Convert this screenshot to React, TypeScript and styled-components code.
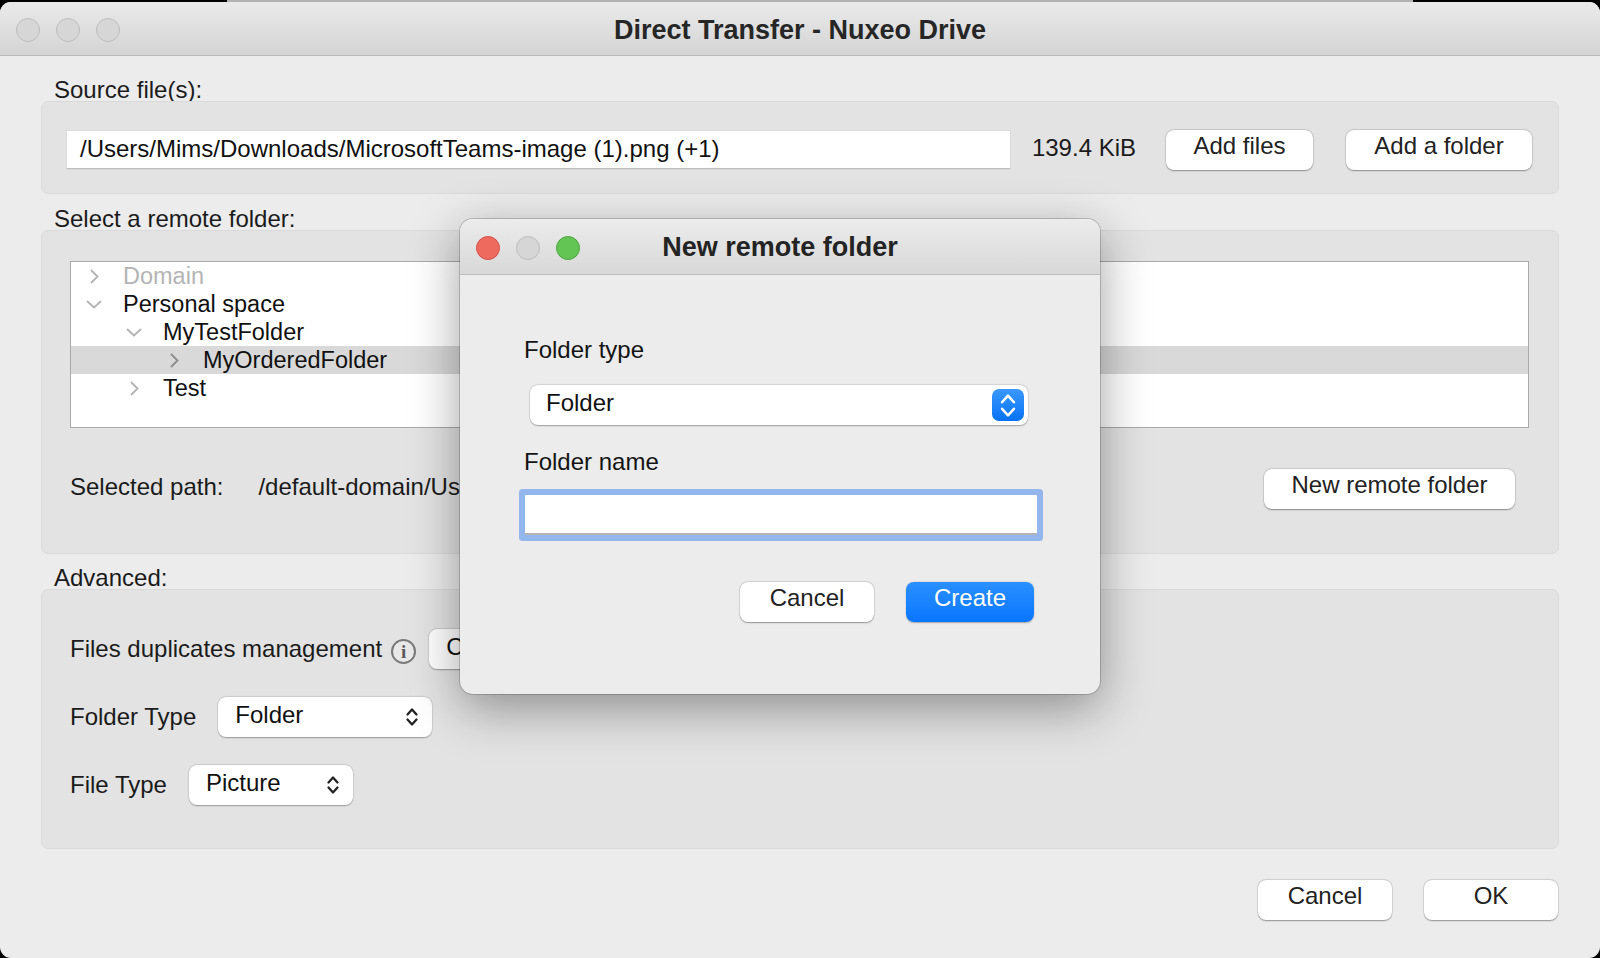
import React from 'react';
import styled, {createGlobalStyle, css} from 'styled-components';

const GlobalStyle = createGlobalStyle`
	html, body {
		margin: 0;
		padding: 0;
	}
	body {
		font-family: 'Liberation Sans', Arial, sans-serif;
		color: #1d1d1d;
	}
`;

const FONT = `'Liberation Sans', Arial, sans-serif`;

const UpDown = ({color = '#222', w = 14, h = 22, stroke = 2.3}: {color?: string; w?: number; h?: number; stroke?: number}) => (
	<svg width={w} height={h} viewBox="0 0 14 22">
		<polyline points="2.5,8.5 7,3.5 11.5,8.5" fill="none" stroke={color} strokeWidth={stroke} strokeLinecap="round" strokeLinejoin="round" />
		<polyline points="2.5,13.5 7,18.5 11.5,13.5" fill="none" stroke={color} strokeWidth={stroke} strokeLinecap="round" strokeLinejoin="round" />
	</svg>
);

const Chevron = ({open, dark}: {open?: boolean; dark?: boolean}) => {
	const color = dark ? '#8c8c8c' : '#b3b3b3';
	return open ? (
		<svg width="16" height="9" viewBox="0 0 16 9">
			<polyline points="1.5,1.5 8,7.5 14.5,1.5" fill="none" stroke={color} strokeWidth="1.8" strokeLinecap="round" />
		</svg>
	) : (
		<svg width="9" height="15" viewBox="0 0 9 15">
			<polyline points="1.5,1.5 7.5,7.5 1.5,13.5" fill="none" stroke={color} strokeWidth="1.8" strokeLinecap="round" />
		</svg>
	);
};

type TreeItem = {label: string; level: number; open?: boolean; selected?: boolean; disabled?: boolean};

const tree: TreeItem[] = [
	{label: 'Domain', level: 0, disabled: true},
	{label: 'Personal space', level: 0, open: true},
	{label: 'MyTestFolder', level: 1, open: true},
	{label: 'MyOrderedFolder', level: 2, selected: true},
	{label: 'Test', level: 1},
];

export default function App() {
	return (
		<Desktop>
			<GlobalStyle />
			<Window>
				<TitleBar>
					<Lights>
						<Light />
						<Light />
						<Light />
					</Lights>
					<WindowTitle>Direct Transfer - Nuxeo Drive</WindowTitle>
					<span />
				</TitleBar>

				<Content>
					<GroupLabel $top={23}>Source file(s):</GroupLabel>
					<GroupBox $height={93}>
						<SourceRow>
							<PathInput>/Users/Mims/Downloads/MicrosoftTeams-image (1).png (+1)</PathInput>
							<SizeText>139.4 KiB</SizeText>
							<MacButton $width={147}>Add files</MacButton>
							<MacButton $width={186} style={{marginLeft: 33}}>
								Add a folder
							</MacButton>
						</SourceRow>
					</GroupBox>

					<GroupLabel $top={14}>Select a remote folder:</GroupLabel>
					<GroupBox $height={324}>
						<RemoteInner>
							<Tree>
								{tree.map((item) => (
									<TreeRow key={item.label} $level={item.level} $selected={item.selected}>
										<ChevronCell>
											<Chevron open={item.open} dark={item.selected} />
										</ChevronCell>
										<TreeLabel $disabled={item.disabled}>{item.label}</TreeLabel>
									</TreeRow>
								))}
							</Tree>
							<PathRow>
								<PathLabel>Selected path:</PathLabel>
								<PathValue>/default-domain/UserWorkspaces/mims/MyTestFolder/MyOrderedFolder</PathValue>
								<MacButton $width={251}>New remote folder</MacButton>
							</PathRow>
						</RemoteInner>
					</GroupBox>

					<GroupLabel $top={13}>Advanced:</GroupLabel>
					<GroupBox $height={260}>
						<AdvancedInner>
							<FieldRow>
								<FieldLabel>Files duplicates management</FieldLabel>
								<InfoIcon>i</InfoIcon>
								<Combo $width={300} style={{marginLeft: 13}}>
									<ComboText>Create a new document</ComboText>
								</Combo>
							</FieldRow>
							<FieldRow>
								<FieldLabel>Folder Type</FieldLabel>
								<Combo $width={214}>
									<ComboText>Folder</ComboText>
									<UpDown />
								</Combo>
							</FieldRow>
							<FieldRow>
								<FieldLabel>File Type</FieldLabel>
								<Combo $width={164}>
									<ComboText>Picture</ComboText>
									<UpDown />
								</Combo>
							</FieldRow>
						</AdvancedInner>
					</GroupBox>

					<Footer>
						<MacButton $width={134}>Cancel</MacButton>
						<MacButton $width={134}>OK</MacButton>
					</Footer>
				</Content>

				<Dialog>
					<DialogTitleBar>
						<Lights>
							<Light $color="red" />
							<Light />
							<Light $color="green" />
						</Lights>
						<DialogTitle>New remote folder</DialogTitle>
						<span />
					</DialogTitleBar>
					<DialogBody>
						<DialogLabel $top={61}>Folder type</DialogLabel>
						<DialogCombo>
							<ComboText>Folder</ComboText>
							<Stepper>
								<UpDown color="#fff" w={20} h={29} stroke={1.9} />
							</Stepper>
						</DialogCombo>
						<DialogLabel $top={23}>Folder name</DialogLabel>
						<NameInput />
						<DialogButtons>
							<MacButton $width={134}>Cancel</MacButton>
							<MacButton $width={128} $primary>
								Create
							</MacButton>
						</DialogButtons>
					</DialogBody>
				</Dialog>
			</Window>
		</Desktop>
	);
}

const Desktop = styled.div`
	width: 1600px;
	height: 958px;
	padding-top: 2px;
	box-sizing: border-box;
	overflow: hidden;
	background: linear-gradient(to right, #000 0 227px, #b2b2b2 227px 1413px, #000 1413px);
`;

const Window = styled.div`
	position: relative;
	width: 1600px;
	height: 956px;
	border-radius: 11px;
	overflow: hidden;
	background: #ececec;
	display: flex;
	flex-direction: column;
`;

const TitleBar = styled.div`
	height: 53px;
	flex-shrink: 0;
	display: grid;
	grid-template-columns: 1fr auto 1fr;
	align-items: center;
	padding: 0 16px;
	background: linear-gradient(to bottom, #eaeaea, #d4d4d4);
	border-bottom: 1px solid #b9b9b9;
`;

const Lights = styled.div`
	display: flex;
	gap: 16px;
	margin-top: 2px;
`;

const Light = styled.span<{$color?: 'red' | 'green'}>`
	width: 24px;
	height: 24px;
	border-radius: 50%;
	box-sizing: border-box;
	background: #d6d6d6;
	border: 1px solid #bdbdbd;
	${({$color}) =>
		$color === 'red' &&
		css`
			background: #ee6a5e;
			border-color: #d25448;
		`}
	${({$color}) =>
		$color === 'green' &&
		css`
			background: #62c554;
			border-color: #4ca83f;
		`}
`;

const WindowTitle = styled.div`
	font-family: ${FONT};
	font-weight: 700;
	font-size: 27px;
	color: #262626;
	margin-top: 4px;
`;

const Content = styled.div`
	padding: 0 41px;
	display: flex;
	flex-direction: column;
`;

const GroupLabel = styled.div<{$top: number}>`
	margin-top: ${({$top}) => $top}px;
	padding-left: 13px;
	font-size: 24px;
	line-height: 22px;
	height: 22px;
	color: #1b1b1b;
`;

const GroupBox = styled.div<{$height: number}>`
	height: ${({$height}) => $height}px;
	box-sizing: border-box;
	background: #e3e3e3;
	border: 1px solid #dadada;
	border-radius: 7px;
`;

const SourceRow = styled.div`
	display: flex;
	align-items: center;
	padding: 28px 26px 0 25px;
`;

const PathInput = styled.div`
	flex: 1;
	height: 38px;
	box-sizing: border-box;
	background: #fff;
	border-bottom: 1px solid #bdbdbd;
	box-shadow: 0 0 0 0.5px rgba(0, 0, 0, 0.08);
	font-size: 24px;
	line-height: 36px;
	padding-left: 13px;
	white-space: nowrap;
	color: #111;
`;

const SizeText = styled.span`
	margin: 0 30px 0 22px;
	font-size: 24px;
	color: #1b1b1b;
	padding-bottom: 4px;
`;

const MacButton = styled.div<{$width: number; $primary?: boolean}>`
	width: ${({$width}) => $width}px;
	height: 40px;
	flex-shrink: 0;
	box-sizing: border-box;
	padding-bottom: 8px;
	border-radius: 8px;
	background: #fff;
	box-shadow: 0 0.5px 1.5px rgba(0, 0, 0, 0.35), 0 0 0 0.5px rgba(0, 0, 0, 0.1);
	font-size: 24px;
	line-height: 32px;
	text-align: center;
	color: #222;
	${({$primary}) =>
		$primary &&
		css`
			background: linear-gradient(to bottom, #2a90ff, #0a76ff);
			color: #fff;
			box-shadow: 0 0.5px 1.5px rgba(0, 0, 0, 0.3);
		`}
`;

const RemoteInner = styled.div`
	padding: 30px 29px 0 28px;
	display: flex;
	flex-direction: column;
`;

const Tree = styled.div`
	height: 167px;
	box-sizing: border-box;
	background: #fff;
	border: 1px solid #a9a9a9;
	overflow: hidden;
`;

const TreeRow = styled.div<{$level: number; $selected?: boolean}>`
	height: 28px;
	display: flex;
	align-items: center;
	padding-left: ${({$level}) => 13 + $level * 40}px;
	background: ${({$selected}) => ($selected ? '#d9d9d9' : 'transparent')};
`;

const ChevronCell = styled.span`
	width: 20px;
	height: 28px;
	display: flex;
	align-items: center;
	justify-content: center;
	margin-right: 19px;
`;

const TreeLabel = styled.span<{$disabled?: boolean}>`
	font-size: 23.5px;
	color: ${({$disabled}) => ($disabled ? '#b4b4b4' : '#111')};
	white-space: nowrap;
`;

const PathRow = styled.div`
	display: flex;
	align-items: center;
	margin-top: 41px;
	padding-right: 14px;
`;

const PathLabel = styled.span`
	font-size: 24px;
	color: #1b1b1b;
	margin-right: 35px;
	padding-bottom: 4px;
`;

const PathValue = styled.span`
	flex: 1;
	font-size: 24px;
	color: #1b1b1b;
	white-space: nowrap;
	padding-bottom: 4px;
`;

const AdvancedInner = styled.div`
	padding: 39px 0 0 28px;
	display: flex;
	flex-direction: column;
	gap: 28px;
`;

const FieldRow = styled.div`
	display: flex;
	align-items: center;
	height: 40px;
`;

const FieldLabel = styled.span`
	font-size: 24px;
	color: #1b1b1b;
	margin-right: 22px;
	white-space: nowrap;
`;

const InfoIcon = styled.span`
	width: 25px;
	height: 25px;
	margin-left: -13px;
	margin-top: 4px;
	box-sizing: border-box;
	border-radius: 50%;
	border: 2px solid #7a7a7a;
	background: #e9e9e9;
	display: flex;
	align-items: center;
	justify-content: center;
	font-family: 'Liberation Serif', 'Times New Roman', serif;
	font-weight: 700;
	font-size: 19px;
	line-height: 1;
	color: #5a5a5a;
`;

const Combo = styled.div<{$width: number}>`
	width: ${({$width}) => $width}px;
	height: 40px;
	box-sizing: border-box;
	flex-shrink: 0;
	display: flex;
	align-items: center;
	justify-content: space-between;
	padding: 0 13px 0 17px;
	border-radius: 8px;
	background: #fff;
	box-shadow: 0 0.5px 1.5px rgba(0, 0, 0, 0.3), 0 0 0 0.5px rgba(0, 0, 0, 0.08);
`;

const ComboText = styled.span`
	font-size: 24px;
	color: #111;
	padding-bottom: 5px;
	white-space: nowrap;
`;

const Footer = styled.div`
	display: flex;
	justify-content: flex-end;
	gap: 32px;
	margin-top: 31px;
	padding-right: 1px;
`;

const Dialog = styled.div`
	position: absolute;
	left: 460px;
	top: 217px;
	width: 640px;
	height: 475px;
	border-radius: 13px;
	overflow: hidden;
	background: #ececec;
	box-shadow: 0 14px 50px rgba(0, 0, 0, 0.38), 0 0 0 1px rgba(0, 0, 0, 0.18);
	display: flex;
	flex-direction: column;
`;

const DialogTitleBar = styled(TitleBar)`
	height: 55px;
	padding: 0 16px;
	background: linear-gradient(to bottom, #ececec, #d8d8d8);
	border-bottom: 1px solid #bdbdbd;
`;

const DialogTitle = styled.div`
	font-family: ${FONT};
	font-weight: 700;
	font-size: 27px;
	color: #232323;
	margin-top: 2px;
`;

const DialogBody = styled.div`
	padding: 0 66px 0 64px;
	display: flex;
	flex-direction: column;
`;

const DialogLabel = styled.div<{$top: number}>`
	margin-top: ${({$top}) => $top}px;
	font-size: 24px;
	line-height: 28px;
	color: #141414;
`;

const DialogCombo = styled.div`
	margin: 21px 6px 0 6px;
	height: 40px;
	box-sizing: border-box;
	display: flex;
	align-items: center;
	justify-content: space-between;
	padding: 0 4px 0 16px;
	border-radius: 8px;
	background: #fff;
	box-shadow: 0 0.5px 1.5px rgba(0, 0, 0, 0.3), 0 0 0 0.5px rgba(0, 0, 0, 0.08);
`;

const Stepper = styled.span`
	width: 32px;
	height: 32px;
	border-radius: 7px;
	background: linear-gradient(to bottom, #3a99ff, #0872f4);
	display: flex;
	align-items: center;
	justify-content: center;
`;

const NameInput = styled.div`
	margin: 19px -3px 0 1px;
	height: 40px;
	box-sizing: border-box;
	background: #fff;
	border-bottom: 2px solid #b5b5b5;
	box-shadow: 0 0 0 6px #93b7ec;
	border-radius: 1px;
`;

const DialogButtons = styled.div`
	display: flex;
	justify-content: flex-end;
	gap: 32px;
	margin-top: 47px;
`;
